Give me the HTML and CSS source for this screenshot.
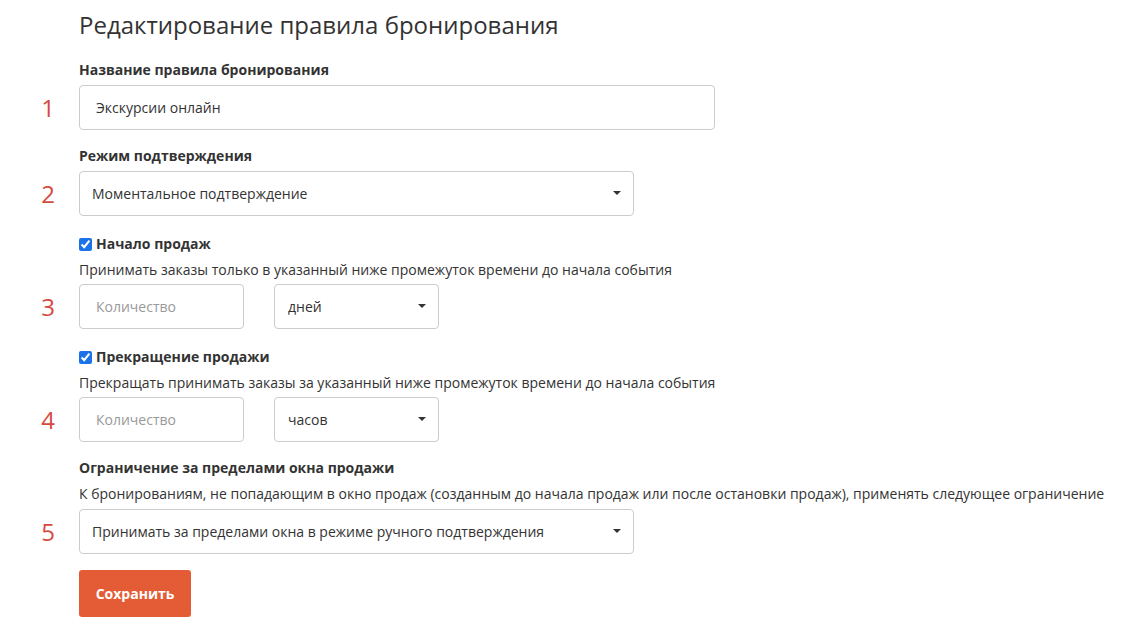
FILE: index.html
```html
<!DOCTYPE html>
<html lang="ru">
<head>
    <meta charset="UTF-8">
    <meta name="viewport" content="width=device-width, initial-scale=1.0">
    <title>Редактирование правила бронирования</title>
    <link rel="stylesheet" href="styles.css">
</head>
<body>
    <div class="page">
        <h1 class="title">Редактирование правила бронирования</h1>

        <!-- Название -->
        <div class="group">
            <label class="label">Название правила бронирования</label>
            <div class="row">
                <span class="num">1</span>
                <input class="control control-wide" type="text" value="Экскурсии онлайн">
            </div>
        </div>

        <!-- Режим -->
        <div class="group">
            <label class="label">Режим подтверждения</label>
            <div class="row">
                <span class="num">2</span>
                <div class="select select-mid">
                    <select class="control">
                        <option>Моментальное подтверждение</option>
                    </select>
                </div>
            </div>
        </div>

        <!-- Начало продаж -->
        <div class="group">
            <label class="check"><input type="checkbox" checked> Начало продаж</label>
            <p class="hint">Принимать заказы только в указанный ниже промежуток времени до начала события</p>
            <div class="row">
                <span class="num">3</span>
                <input class="control control-small" type="text" placeholder="Количество">
                <div class="select select-small">
                    <select class="control">
                        <option>дней</option>
                    </select>
                </div>
            </div>
        </div>

        <!-- Прекращение продажи -->
        <div class="group">
            <label class="check"><input type="checkbox" checked> Прекращение продажи</label>
            <p class="hint">Прекращать принимать заказы за указанный ниже промежуток времени до начала события</p>
            <div class="row">
                <span class="num">4</span>
                <input class="control control-small" type="text" placeholder="Количество">
                <div class="select select-small">
                    <select class="control">
                        <option>часов</option>
                    </select>
                </div>
            </div>
        </div>

        <!-- Ограничение -->
        <div class="group">
            <label class="label">Ограничение за пределами окна продажи</label>
            <p class="hint">К бронированиям, не попадающим в окно продаж (созданным до начала продаж или после остановки продаж), применять следующее ограничение</p>
            <div class="row">
                <span class="num">5</span>
                <div class="select select-mid">
                    <select class="control">
                        <option>Принимать за пределами окна в режиме ручного подтверждения</option>
                    </select>
                </div>
            </div>
        </div>

        <div class="actions">
            <button class="save-btn" type="button">Сохранить</button>
        </div>
    </div>
</body>
</html>
```

FILE: styles.css
```css
* { box-sizing: border-box; margin: 0; padding: 0; }
body { font-family: 'Open Sans', sans-serif; font-size: 14px; line-height: 20px; color: #333; background: #fff; }
.page { padding: 10px 0 0 79px; }
.title { font-size: 24px; font-weight: 400; line-height: 29px; margin-bottom: 21px; }
.group { margin-bottom: 16px; }
.label { display: block; font-weight: 700; margin-bottom: 5px; }
.check { display: flex; align-items: center; font-weight: 700; padding-top: 2px; }
.check input { width: 13px; height: 13px; margin: 0 4px 0 0; accent-color: #1a73e8; }
.hint { margin: 6px 0 5px; }
.check + .hint { margin-bottom: 4px; }
.row { display: flex; align-items: center; gap: 30px; position: relative; }
.num { position: absolute; left: -79px; width: 55px; text-align: right; font-size: 24px; color: #d64a3f; line-height: 30px; }
.control { height: 45px; border: 1px solid #ccc; border-radius: 4px; background: #fff; font-family: inherit; font-size: 14px; color: #333; outline: none; }
input.control { padding: 0 16px; }
input.control::placeholder { color: #999; }
.control-wide { width: 636px; }
.control-small { width: 165px; }
.select { position: relative; }
.select select { width: 100%; appearance: none; -webkit-appearance: none; padding: 0 30px 0 12px; }
.select::after { content: ""; position: absolute; right: 13px; top: 20px; border-left: 4px solid transparent; border-right: 4px solid transparent; border-top: 4px solid #333; pointer-events: none; }
.select-mid { width: 555px; }
.select-small { width: 165px; }
.select-small select { padding-left: 13px; }
.save-btn { width: 112px; height: 47px; background: #e45c35; color: #fff; border: none; border-radius: 3px; font-family: inherit; font-size: 14px; font-weight: 700; cursor: pointer; }
```
